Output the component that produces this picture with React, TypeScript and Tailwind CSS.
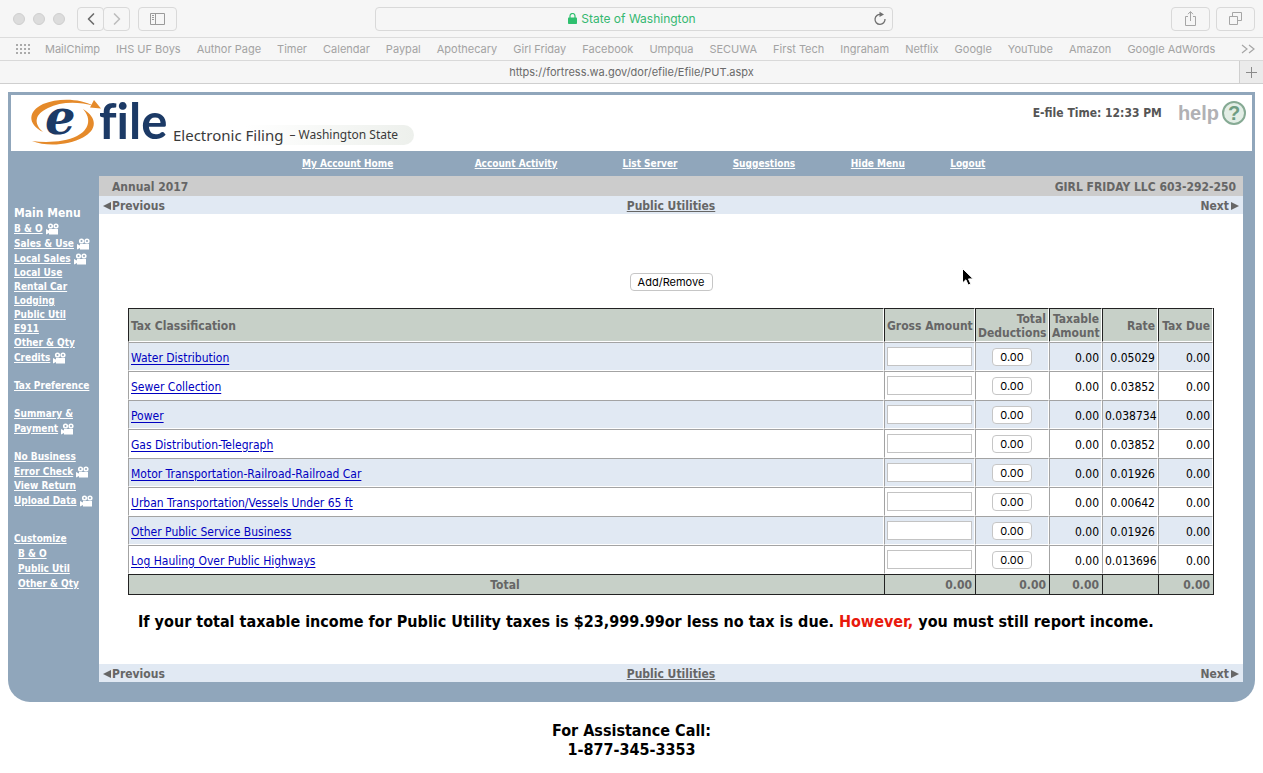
import { ChevronLeft, ChevronRight } from 'lucide-react';

const BOOKMARKS = [
  'MailChimp', 'IHS UF Boys', 'Author Page', 'Timer', 'Calendar', 'Paypal',
  'Apothecary', 'Girl Friday', 'Facebook', 'Umpqua', 'SECUWA', 'First Tech',
  'Ingraham', 'Netflix', 'Google', 'YouTube', 'Amazon', 'Google AdWords',
];

interface MenuItem {
  label: string;
  video?: boolean;
}

const MENU_GROUPS: MenuItem[][] = [
  [
    { label: 'B & O', video: true },
    { label: 'Sales & Use', video: true },
    { label: 'Local Sales', video: true },
    { label: 'Local Use' },
    { label: 'Rental Car' },
    { label: 'Lodging' },
    { label: 'Public Util' },
    { label: 'E911' },
    { label: 'Other & Qty' },
    { label: 'Credits', video: true },
  ],
  [{ label: 'Tax Preference' }],
  [{ label: 'Summary &' }, { label: 'Payment', video: true }],
  [
    { label: 'No Business' },
    { label: 'Error Check', video: true },
    { label: 'View Return' },
    { label: 'Upload Data', video: true },
  ],
];

const ROWS = [
  { name: 'Water Distribution', rate: '0.05029' },
  { name: 'Sewer Collection', rate: '0.03852' },
  { name: 'Power', rate: '0.038734' },
  { name: 'Gas Distribution-Telegraph', rate: '0.03852' },
  { name: 'Motor Transportation-Railroad-Railroad Car', rate: '0.01926' },
  { name: 'Urban Transportation/Vessels Under 65 ft', rate: '0.00642' },
  { name: 'Other Public Service Business', rate: '0.01926' },
  { name: 'Log Hauling Over Public Highways', rate: '0.013696' },
];

function BrowserChrome() {
  return (
    <header className="bg-[#f6f6f6] font-[Inter,sans-serif] text-[#a3a3a3]">
      {/* toolbar */}
      <div className="grid h-[38px] grid-cols-[1fr_auto_1fr] items-center border-b border-[#dcdcdc] pr-2 pl-[13px]">
        <div className="flex items-center">
          <div className="flex gap-2">
            <span className="size-3 rounded-full border border-[#cfcfcf] bg-[#dcdcdc]" />
            <span className="size-3 rounded-full border border-[#cfcfcf] bg-[#dcdcdc]" />
            <span className="size-3 rounded-full border border-[#cfcfcf] bg-[#dcdcdc]" />
          </div>
          <div className="ml-3 flex">
            <button aria-label="Back" className="flex h-6 w-[27px] items-center justify-center rounded border border-[#d9d9d9] text-[#6c6c6c]">
              <ChevronLeft size={20} strokeWidth={2} />
            </button>
            <button aria-label="Forward" className="-ml-px flex h-6 w-[27px] items-center justify-center rounded border border-[#d9d9d9] text-[#bdbdbd]">
              <ChevronRight size={20} strokeWidth={2} />
            </button>
          </div>
          <button aria-label="Sidebar" className="ml-2 flex h-6 w-[39px] items-center justify-center rounded border border-[#d9d9d9]">
            <svg width="15" height="12" viewBox="0 0 15 12" fill="none" stroke="#9a9a9a">
              <path d="M.5.5h14v11H.5zM5.5.5v11M2 2.500h2M2 4.500h2M2 6.500h2" />
            </svg>
          </button>
        </div>
        <div className="flex h-6 w-[41vw] items-center rounded border border-[#d9d9d9] pl-4 pr-1">
          <span className="flex flex-1 items-center justify-center gap-1 text-[12px] text-[#35b871]">
            <svg width="9" height="11" viewBox="0 0 9 11" fill="none">
              <path d="M2 5V3a2.5 2.5 0 0 1 5 0v2" stroke="#2fc06f" strokeWidth="1.2" />
              <rect y="4.5" width="9" height="6.5" rx=".8" fill="#2fc06f" />
            </svg>
            State of Washington
          </span>
          <button aria-label="Reload">
            <svg width="16" height="16" viewBox="0 0 16 16" fill="none">
              <path d="M9 3.5A5 5 0 1 0 13 8" stroke="#6f6f6f" strokeWidth="1.3" />
              <path d="M7.5.8 12 3.6 7.5 6z" fill="#6f6f6f" />
            </svg>
          </button>
        </div>
        <div className="ml-auto flex gap-[6px]">
          <button aria-label="Share" className="flex h-6 w-[39px] items-center justify-center rounded border border-[#d9d9d9]">
            <svg width="13" height="17" viewBox="0 0 13 17" fill="none" stroke="#a6a6a6">
              <path d="M4 6.500H1.500v9h10v-9H9M6.500 11V2M4 4.200 6.500 1.500 9 4.200" />
            </svg>
          </button>
          <button aria-label="Show tabs" className="flex h-6 w-[39px] items-center justify-center rounded border border-[#d9d9d9]">
            <svg width="13" height="13" viewBox="0 0 13 13" fill="none" stroke="#a6a6a6">
              <path d="M.5 4.500h8v8h-8zM3.500 4.500v-4h9v8h-4" />
            </svg>
          </button>
        </div>
      </div>

      {/* bookmarks */}
      <nav className="flex h-[23px] items-center gap-4 border-b border-[#d9d9d9] pl-4 pr-2 text-[11px] whitespace-nowrap">
        <svg width="14" height="10" viewBox="0 0 14 10" fill="#ababab" className="-mr-px shrink-0">
          {[0, 4, 8, 12].map((x) => [0, 4, 8].map((y) => (
            <rect key={`${x}-${y}`} x={x} y={y} width="2" height="2" />
          )))}
        </svg>
        {BOOKMARKS.map((b) => (
          <a key={b} href="#">{b}</a>
        ))}
        <svg width="14" height="10" viewBox="0 0 14 10" fill="none" stroke="#a6a6a6" strokeWidth="1.2" className="ml-auto shrink-0">
          <path d="M1 1l5 4-5 4M8 1l5 4-5 4" />
        </svg>
      </nav>

      {/* tab */}
      <div className="flex h-[23px] border-b border-[#cfcfcf] text-[11px] text-[#6a6a6a]">
        <div className="flex flex-1 items-center justify-center pl-6">https://fortress.wa.gov/dor/efile/Efile/PUT.aspx</div>
        <button aria-label="New tab" className="flex w-6 items-center justify-center border-l border-[#cfcfcf] bg-[#ebebeb]">
          <svg width="11" height="11" viewBox="0 0 11 11" stroke="#8a8a8a">
            <path d="M5.500 0v11M0 5.500h11" />
          </svg>
        </button>
      </div>
    </header>
  );
}

function Logo() {
  return (
    <div className="flex">
      <svg width="138" height="56" viewBox="0 0 138 56" className="overflow-visible">
        <path d="M12 37C-4 29-3 16 12 9 27 3 48 3 63 11 46 6 29 7 17 13 4 19 2 28 12 37z" fill="#e58a2a" />
        <path d="M52 14c15 9 14 21 0 28.500C38 50 16 52 1 46c15 2 33 1 45-5 12-6 15-17 6-27z" fill="#e58a2a" />
        <path d="M63 5l7 8.500-11-1z" fill="#e58a2a" />
        <text x="14" y="39" fontSize="48" fontWeight="700" fontStyle="italic" fontFamily="'DejaVu Serif', serif" fill="#1c3a66">e</text>
        <text x="68" y="44" fontSize="49" fontWeight="700" fontFamily="Lato, sans-serif" fill="#1c3a66" className="[font-variant-ligatures:none]">file</text>
      </svg>
      <div className="mt-[30px] ml-1 flex h-5 items-center gap-[6px] rounded-r-full bg-gradient-to-r from-white from-30% to-[#edf0ec] pr-4 font-['Noto_Sans',sans-serif] whitespace-nowrap text-[#3a3a3a]">
        <span className="text-[15px] leading-5">Electronic Filing</span>
        <span className="text-[12px] leading-5">– Washington State</span>
      </div>
    </div>
  );
}

function VideoIcon() {
  return (
    <svg width="13" height="12" viewBox="0 0 13 12" fill="#fff" className="shrink-0">
      <path d="M0 6l3 1.500V6h9v5.500H3v-1.500L0 11.500z" />
      <circle cx="4.500" cy="3" r="1.800" fill="none" stroke="#fff" strokeWidth="1.600" />
      <circle cx="10" cy="3" r="1.800" fill="none" stroke="#fff" strokeWidth="1.600" />
    </svg>
  );
}

function SideMenu() {
  return (
    <nav className="w-[91px] shrink-0 pt-[29px] pl-[6px] text-[10px] leading-[14px] font-bold whitespace-nowrap text-white">
      <h2 className="text-[12px] leading-4">Main Menu</h2>
      {MENU_GROUPS.map((group) => (
        <ul key={group[0].label} className="mb-[14px]">
          {group.map((item) => (
            <li key={item.label} className={item.video ? 'flex h-[15px] items-center gap-[3px]' : 'h-[14px]'}>
              <a href="#" className="underline">{item.label}</a>
              {item.video && <VideoIcon />}
            </li>
          ))}
        </ul>
      ))}
      <div className="mt-[23px] leading-[15px]">
        <a href="#" className="underline">Customize</a>
        <ul className="pl-1">
          <li><a href="#" className="underline">B &amp; O</a></li>
          <li><a href="#" className="underline">Public Util</a></li>
          <li><a href="#" className="underline">Other &amp; Qty</a></li>
        </ul>
      </div>
    </nav>
  );
}

function Pager() {
  return (
    <div className="grid h-[18px] grid-cols-3 items-center bg-[#e1e9f3] px-1 text-[12px] leading-4 font-bold text-[#666]">
      <a href="#" className="flex items-center pt-px">
        <svg width="9" height="8" viewBox="0 0 9 8" fill="#666"><path d="M8 0v8L0 4z" /></svg>
        Previous
      </a>
      <a href="#" className="pt-px text-center underline">Public Utilities</a>
      <a href="#" className="flex items-center justify-end gap-px pt-px">
        Next
        <svg width="9" height="8" viewBox="0 0 9 8" fill="#666"><path d="M1 0v8l8-4z" /></svg>
      </a>
    </div>
  );
}

const headCell = 'border border-t-[#222] border-l-[#222] border-r-white border-b-white bg-[#c7d0c8] px-[2px] pt-[2px] leading-[14px]';
const bodyCell = 'border border-t-[#a3a3a3] border-l-[#a3a3a3] border-r-white border-b-white px-[2px]';
const footCell = 'border-t border-l border-b border-[#222] bg-[#c7d0c8] pr-[3px]';

function TaxTable() {
  return (
    <table className="w-full table-fixed border-separate border-spacing-0 border-r border-[#222] text-right text-[12px]">
      <colgroup>
        <col />
        <col className="w-[91px]" />
        <col className="w-[74px]" />
        <col className="w-[53px]" />
        <col className="w-[56px]" />
        <col className="w-[55px]" />
      </colgroup>
      <thead className="text-[#666]">
        <tr className="h-[34px]">
          <th className={`${headCell} text-left`}>Tax Classification</th>
          <th className={`${headCell} whitespace-nowrap`}>Gross Amount</th>
          <th className={headCell}>Total Deductions</th>
          <th className={headCell}>Taxable Amount</th>
          <th className={headCell}>Rate</th>
          <th className={`${headCell} whitespace-nowrap`}>Tax Due</th>
        </tr>
      </thead>
      <tbody>
        {ROWS.map((row) => (
          <tr key={row.name} className="h-[29px] odd:bg-[#e1e9f3]">
            <td className={`${bodyCell} pt-[2px] text-left`}>
              <a href="#" className="text-[#0000c0] underline underline-offset-2">{row.name}</a>
            </td>
            <td className={bodyCell}>
              <input type="text" aria-label={`${row.name} gross amount`} className="block h-[19px] w-full border border-[#c3c3c3] bg-white px-1" />
            </td>
            <td className={`${bodyCell} text-center`}>
              <button className="mx-auto block h-[18px] w-10 rounded border border-[#c6c6c6] bg-white font-[Inter,sans-serif] text-[11px] leading-4">0.00</button>
            </td>
            <td className={`${bodyCell} pt-[2px]`}>0.00</td>
            <td className={`${bodyCell} pt-[2px]`}>{row.rate}</td>
            <td className={`${bodyCell} pt-[2px]`}>0.00</td>
          </tr>
        ))}
      </tbody>
      <tfoot className="text-[#666]">
        <tr className="h-[21px]">
          <th className={`${footCell} text-center`}>Total</th>
          <th className={footCell}>0.00</th>
          <th className={footCell}>0.00</th>
          <th className={footCell}>0.00</th>
          <th className={footCell} />
          <th className={footCell}>0.00</th>
        </tr>
      </tfoot>
    </table>
  );
}

export default function App() {
  return (
    <div className="min-h-screen bg-white font-['DejaVu_Sans_Condensed','Noto_Sans',sans-serif] text-black">
      <BrowserChrome />

      <main className="px-2 pt-2">
        <div className="rounded-b-[22px] bg-[#90a6bb] pb-5">
          <div className="px-[3px] pt-[3px]">
            <div className="flex h-14 justify-between bg-white pr-[6px] pl-5">
              <Logo />
              <div className="flex h-9 items-center gap-4">
                <span className="text-[12px] font-bold text-[#555]">E-file Time: 12:33 PM</span>
                <a href="#" className="flex items-center gap-[3px] font-['Liberation_Sans',sans-serif] text-[20px] font-bold text-[#b1b1b4]">
                  help
                  <span className="flex size-6 items-center justify-center rounded-full border-2 border-[#86aa94] bg-[#e3eee6] text-[20px] text-[#6f9d82]">?</span>
                </a>
              </div>
            </div>
          </div>

          <div className="pr-[6px]">
            <nav className="mx-auto grid h-[25px] w-3/5 grid-cols-[183fr_154fr_114fr_114fr_114fr_66fr] items-center text-center text-[10px] font-bold whitespace-nowrap text-white">
              <a href="#" className="underline">My Account Home</a>
              <a href="#" className="underline">Account Activity</a>
              <a href="#" className="underline">List Server</a>
              <a href="#" className="underline">Suggestions</a>
              <a href="#" className="underline">Hide Menu</a>
              <a href="#" className="underline">Logout</a>
            </nav>
          </div>

          <div className="flex pr-3">
            <SideMenu />
            <section className="flex-1 bg-white">
              <div className="flex h-5 items-center justify-between bg-[#ccc] pt-px pr-[7px] pl-[13px] text-[12px] font-bold text-[#666]">
                <span>Annual 2017</span>
                <span>GIRL FRIDAY LLC 603-292-250</span>
              </div>
              <Pager />
              <div className="px-[29px] pt-[59px] pb-[31px]">
                <button className="mx-auto block h-[18px] w-[83px] rounded border border-[#c6c6c6] bg-white font-[Inter,sans-serif] text-[11px] leading-4">
                  Add/Remove
                </button>
                <div className="pt-[17px]">
                  <TaxTable />
                </div>
                <p className="mt-4 pl-[10px] text-[16px] leading-[22px] font-bold">
                  If your total taxable income for Public Utility taxes is $23,999.99or less no tax is due.{' '}
                  <span className="text-[#e8190c]">However,</span> you must still report income.
                </p>
              </div>
              <Pager />
            </section>
          </div>
        </div>

        <p className="mt-[19px] text-center text-[16px] leading-[19px] font-bold">
          For Assistance Call:
          <br />
          1-877-345-3353
        </p>
      </main>

      {/* mouse pointer */}
      <svg width="14" height="20" viewBox="0 0 14 20" className="absolute top-[267px] left-[961px]">
        <path d="M1.500 1.500v14.500l3.400-3.200 2.300 5.200 2.600-1.100-2.300-5h4.700z" fill="#000" stroke="#fff" />
      </svg>
    </div>
  );
}
